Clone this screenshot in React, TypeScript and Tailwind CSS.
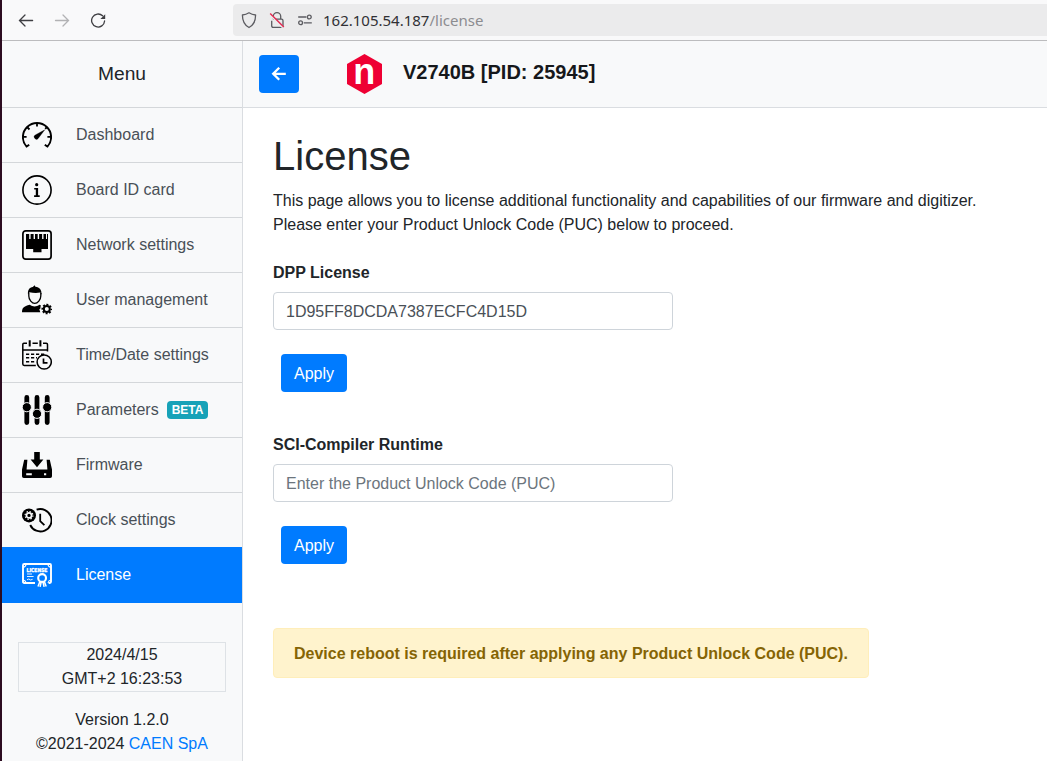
import type { ReactNode } from 'react';

function Svg({ children }: { children: ReactNode }) {
  return (
    <svg width="30" height="30" viewBox="0 0 30 30" fill="none" stroke="currentColor" className="shrink-0">
      {children}
    </svg>
  );
}

const DashboardIcon = () => (
  <Svg>
    <path d="M7.2 24.7 4.6 26.6A14.1 14.1 0 1 1 25.4 26.6L22.8 24.7" strokeWidth="1.9" />
    <path d="M15 3v3.4M1 16.8h3.6M25.4 16.8H29M5 7l2.5 2.5M25 7l-1.8 1.8" strokeWidth="1.8" />
    <path d="M22.8 9.8 13.2 15a2.3 2.3 0 1 0 3.2 3.2Z" fill="currentColor" strokeWidth=".3" />
  </Svg>
);

const InfoIcon = () => (
  <Svg>
    <circle cx="15" cy="15" r="14.1" strokeWidth="1.6" />
    <circle cx="14.7" cy="9.7" r="1.6" fill="currentColor" stroke="none" />
    <path d="M12.2 13h3.9v7.3h1.6v1.6h-5.6v-1.6h1.7v-5.7h-1.6Z" fill="currentColor" stroke="none" />
  </Svg>
);

const NetworkIcon = () => (
  <Svg>
    <rect x=".9" y=".9" width="28.2" height="28.2" rx="2.8" strokeWidth="1.7" />
    <path
      d="M4 4h3.2v5h1.4V4h3v5H13V4h2.700v5h1.4V4h3v5h1.4V4H24v5h1V4h1v15h-6.5v3.3h-8.3V19H4Z"
      fill="currentColor"
      stroke="none"
    />
  </Svg>
);

const UserIcon = () => (
  <Svg>
    <path d="M6.8 8v3c0 3.8 3.2 7.4 6 7.4s6-3.6 6-7.400V8" strokeWidth="1.3" />
    <path
      d="M6 9.8C5.5 4.5 7.5 2.4 10.8 1.9L12.6.2l.8 1.5c4.2.2 6.5 3.3 6.1 8.1l-1.4-2.2c-3.5.8-7.5.4-10.6-.3Z"
      fill="currentColor"
      stroke="none"
    />
    <path
      d="M0 27.3c.1-4.6 1.5-5.8 7.900-7.5 2.8 2.2 6.6 2.2 9.5 0l1.4.5-.5 3.5-1 .5 1 3Z"
      fill="currentColor"
      stroke="none"
    />
    <circle cx="24.8" cy="24" r="3" strokeWidth="2" />
    <circle cx="24.8" cy="24" r="4.5" strokeWidth="1.7" strokeDasharray="2 1.534" strokeDashoffset="1" />
  </Svg>
);

const CalendarIcon = () => (
  <Svg>
    <path
      d="M5 3.3H1.9Q.8 3.3.8 4.6v19.5q0 1.4 1.4 1.4h11.6M10.5 3.3h5.3M21 3.3h3.2q1.3 0 1.3 1.3v7M.8 10h24.7"
      strokeWidth="1.5"
    />
    <path d="M7.7.2v6.2M18.4.2v6.2" strokeWidth="2" />
    <path
      d="M4 14.2h3.2m1.8 0h3.2m1.8 0h3.2m1.8 0h3.2M4 17.8h3.2m1.8 0h3.2m1.8 0h1M4 21.7h3.2m1.8 0h3.2"
      strokeWidth="1.5"
    />
    <circle cx="22.2" cy="22" r="7.1" strokeWidth="1.5" />
    <path d="M21.5 18.5v4.3h4" strokeWidth="1.7" />
  </Svg>
);

const SlidersIcon = () => (
  <Svg>
    <path d="M4.8 2.4v25.2M15 2.4v25.2M25.2 2.4v25.2" strokeWidth="4.8" strokeLinecap="round" />
    <g fill="currentColor" stroke="#f8f9fa" strokeWidth="1">
      <circle cx="4.8" cy="12.2" r="4.6" />
      <circle cx="15" cy="18.8" r="4.6" />
      <circle cx="25.2" cy="12.2" r="4.6" />
    </g>
  </Svg>
);

const FirmwareIcon = () => (
  <Svg>
    <path d="M12.2 2h5.6v7.5h3.6L15 17.2 8.6 9.5h3.6Z" fill="currentColor" stroke="none" />
    <path
      d="M2.2 9.8h3.2L4.6 19.4h20.8L24.6 9.8h3.2L30 19.5v6.7q0 1.8-1.8 1.8H1.8Q0 28 0 26.2v-6.7Z"
      fill="currentColor"
      stroke="none"
    />
    <path d="M4.2 24.2h5.6M22 24.2h2.2" stroke="#f8f9fa" strokeWidth="2" />
  </Svg>
);

const ClockIcon = () => (
  <Svg>
    <circle cx="7" cy="10.4" r="7" fill="currentColor" stroke="none" />
    <circle cx="7" cy="10.4" r="2.5" stroke="#f8f9fa" strokeWidth="1.7" />
    <circle cx="7" cy="10.4" r="3.9" stroke="#f8f9fa" strokeWidth="1.2" strokeDasharray="1.5 1.563" />
    <path d="M14.6 4.7A11.2 11.2 0 1 1 8.2 20" strokeWidth="1.9" />
    <path d="M18.2 8.7v7.4l4.2 4" strokeWidth="1.8" />
  </Svg>
);

const LicenseIcon = () => (
  <Svg>
    <path
      d="M13 23H2.2Q1 23 1 21.8V5.2Q1 4 2.2 4h25.6Q29 4 29 5.2v16.6q0 1.2-1.2 1.2h-1.2"
      strokeWidth="1.9"
    />
    <path d="M1 7.4Q3.8 7 4.2 4M29 7.4Q26.2 7 25.8 4M1 20q2.6.4 3 3M29 20q-2.4.4-3 3" strokeWidth="1.1" />
    <text
      x="15"
      y="11.6"
      textAnchor="middle"
      textLength="20.8"
      lengthAdjust="spacingAndGlyphs"
      fill="currentColor"
      stroke="currentColor"
      strokeWidth=".4"
      className="font-['DejaVu_Sans',sans-serif] text-[5.3px] font-bold"
    >
      LICENSE
    </text>
    <path d="M5 14h5M5 16.5h6.6M5 19.8l1.8-.8 1.8 1 2-.7" strokeWidth=".9" />
    <circle cx="20.1" cy="18" r="3.9" strokeWidth="2.1" />
    <path d="m17.8 21.8-1.8 4.6M22.4 21.8l1.8 4.6M19.2 22l-1.1 4.9M21 22l1.1 4.9" strokeWidth="1.5" />
  </Svg>
);

const items: { label: string; icon: ReactNode; beta?: boolean; active?: boolean }[] = [
  { label: 'Dashboard', icon: <DashboardIcon /> },
  { label: 'Board ID card', icon: <InfoIcon /> },
  { label: 'Network settings', icon: <NetworkIcon /> },
  { label: 'User management', icon: <UserIcon /> },
  { label: 'Time/Date settings', icon: <CalendarIcon /> },
  { label: 'Parameters', icon: <SlidersIcon />, beta: true },
  { label: 'Firmware', icon: <FirmwareIcon /> },
  { label: 'Clock settings', icon: <ClockIcon /> },
  { label: 'License', icon: <LicenseIcon />, active: true },
];

function BrowserBar() {
  return (
    <div className="flex h-[41px] shrink-0 items-center border-b border-[#bcbcbe] bg-[#f9f9fa]">
      <div className="flex w-[231px] items-center gap-5 pl-4">
        <svg width="16" height="16" viewBox="0 0 16 16" fill="none" stroke="#3e3e42" strokeWidth="1.3" strokeLinecap="round">
          <path d="M1.6 8.5h13M7 3 1.5 8.5 7 14" />
        </svg>
        <svg width="16" height="16" viewBox="0 0 16 16" fill="none" stroke="#b2b2b4" strokeWidth="1.3" strokeLinecap="round">
          <path d="M1.5 8.5h13M9 3l5.5 5.5L9 14" />
        </svg>
        <svg width="16" height="16" viewBox="0 0 16 16" fill="none" stroke="#3e3e42" strokeWidth="1.3">
          <path d="M14.6 9a6.5 6.5 0 1 1-2-5.2" strokeLinecap="round" />
          <path d="M15.2 2.2v4.8h-4.8Z" fill="#3e3e42" stroke="none" />
        </svg>
      </div>
      <div className="flex h-8 flex-1 items-center rounded-l bg-[#ebebec] pl-2">
        <svg width="16" height="18" viewBox="0 0 16 18" fill="none" stroke="#5b5b60" strokeWidth="1.3" strokeLinejoin="round">
          <path d="M8 1.8c2 1.3 4.2 2 6.6 2.2 0 6-1.4 9.8-6.6 12.5C2.8 13.8 1.4 10 1.4 4 3.8 3.8 6 3.1 8 1.8Z" />
        </svg>
        <svg width="16" height="18" viewBox="0 0 16 18" fill="none" stroke="#5b5b60" strokeWidth="1.3" className="ml-3">
          <path d="M4.3 8V5.3a3.7 3.7 0 0 1 7.400 0V8M3.9 8.2h8.6q1.5 0 1.5 1.5v5.1q0 1.5-1.5 1.5H4.2q-1.5 0-1.5-1.5V9.7" />
          <path d="m1 3.4 13 13" stroke="#ebebec" strokeWidth="2.2" />
          <path d="m1.2 2.4 13.6 13.6" stroke="#e22850" strokeWidth="1.4" />
        </svg>
        <svg width="16" height="16" viewBox="0 0 16 16" fill="none" stroke="#5b5b60" strokeWidth="1.3" className="ml-3">
          <path d="M1.2 5h8.2M6.8 10.8h8" />
          <circle cx="12.3" cy="5" r="1.9" />
          <circle cx="3.6" cy="10.8" r="1.9" />
        </svg>
        <span className="ml-[10px] font-['Noto_Sans',sans-serif] text-[15px] leading-5 text-[#303034]">
          162.105.54.187<span className="text-[#8c8c90]">/license</span>
        </span>
      </div>
    </div>
  );
}

function Sidebar() {
  return (
    <aside className="flex w-[241px] shrink-0 flex-col border-r border-[#dadde1] bg-[#f8f9fa]">
      <div className="flex h-[67px] shrink-0 items-center justify-center border-b border-[#d4d7da] text-[19.2px]">Menu</div>
      <nav>
        {items.map((item) => (
          <a
            key={item.label}
            className={
              item.active
                ? '-mt-px flex h-14 items-center bg-[#007bff] pl-5 text-white'
                : 'flex h-[55px] items-center border-b border-[#d4d7da] pl-5 text-[#495057]'
            }
          >
            <span className={item.active ? 'text-white' : 'text-black'}>{item.icon}</span>
            <span className="ml-6 pb-px">{item.label}</span>
            {item.beta && (
              <span className="ml-2 flex h-[18px] items-center rounded bg-[#17a2b8] px-[5px] text-xs font-bold text-white">
                BETA
              </span>
            )}
          </a>
        ))}
      </nav>
      <div className="mx-4 mt-[39px] border border-[#dee2e6] text-center leading-6">
        <div>2024/4/15</div>
        <div>GMT+2 16:23:53</div>
      </div>
      <div className="mt-4 text-center leading-6">
        <div>Version 1.2.0</div>
        <div>
          ©2021-2024 <a className="text-[#007bff]">CAEN SpA</a>
        </div>
      </div>
    </aside>
  );
}

function LicenseForm({ title, value }: { title: string; value?: string }) {
  return (
    <section>
      <label className="block font-bold leading-6">{title}</label>
      <input
        className="mt-[7px] block h-[38px] w-[400px] rounded border border-[#ced4da] bg-white px-3 pt-0.5 text-[#495057] placeholder:text-[#6c757d]"
        defaultValue={value}
        placeholder="Enter the Product Unlock Code (PUC)"
      />
      <button className="ml-2 mt-6 block h-[38px] w-[66px] rounded bg-[#007bff] pt-0.5 text-white">Apply</button>
    </section>
  );
}

export default function App() {
  return (
    <div className="flex h-screen flex-col overflow-hidden border-l-2 border-[#2c0c20] bg-white font-['Liberation_Sans',Arial,sans-serif] text-base text-[#212529]">
      <BrowserBar />
      <div className="flex min-h-0 flex-1">
        <Sidebar />
        <main className="min-w-0 flex-1">
          <header className="flex h-[67px] items-center border-b border-[#dadde1] bg-[#f8f9fa] pl-4">
            <button className="flex h-[38px] w-10 items-center justify-center rounded bg-[#007bff]" aria-label="Back">
              <svg width="16" height="16" viewBox="0 0 16 16" fill="none" stroke="white" strokeWidth="2.3">
                <path d="M14.8 7.8H2.2M8.2 1.8 2.2 7.8l6 6" />
              </svg>
            </button>
            <svg width="36" height="40" viewBox="0 0 36 40" className="ml-12 overflow-visible">
              <path d="M17.5 0 35 10v20L17.5 40 0 30V10Z" fill="#ee0033" />
              <text
                x="17.2"
                y="29.8"
                textAnchor="middle"
                fill="white"
                className="font-['Liberation_Sans',sans-serif] text-[36px] font-bold"
              >
                n
              </text>
            </svg>
            <h2 className="ml-5 pb-1 text-xl font-bold leading-6 text-[#16181b]">V2740B [PID: 25945]</h2>
          </header>
          <div className="pl-[30px] pt-6">
            <h1 className="text-[40px] leading-[48px]">License</h1>
            <p className="mt-[9px] leading-6">
              This page allows you to license additional functionality and capabilities of our firmware and digitizer.
              <br />
              Please enter your Product Unlock Code (PUC) below to proceed.
            </p>
            <div className="mt-6 flex flex-col gap-[41px]">
              <LicenseForm title="DPP License" value="1D95FF8DCDA7387ECFC4D15D" />
              <LicenseForm title="SCI-Compiler Runtime" />
            </div>
            <div className="mt-16 flex h-[50px] w-[596px] items-center rounded border border-[#ffeeba] bg-[#fff3cd] px-5 pt-0.5 font-bold text-[#856404]">
              Device reboot is required after applying any Product Unlock Code (PUC).
            </div>
          </div>
        </main>
      </div>
    </div>
  );
}
